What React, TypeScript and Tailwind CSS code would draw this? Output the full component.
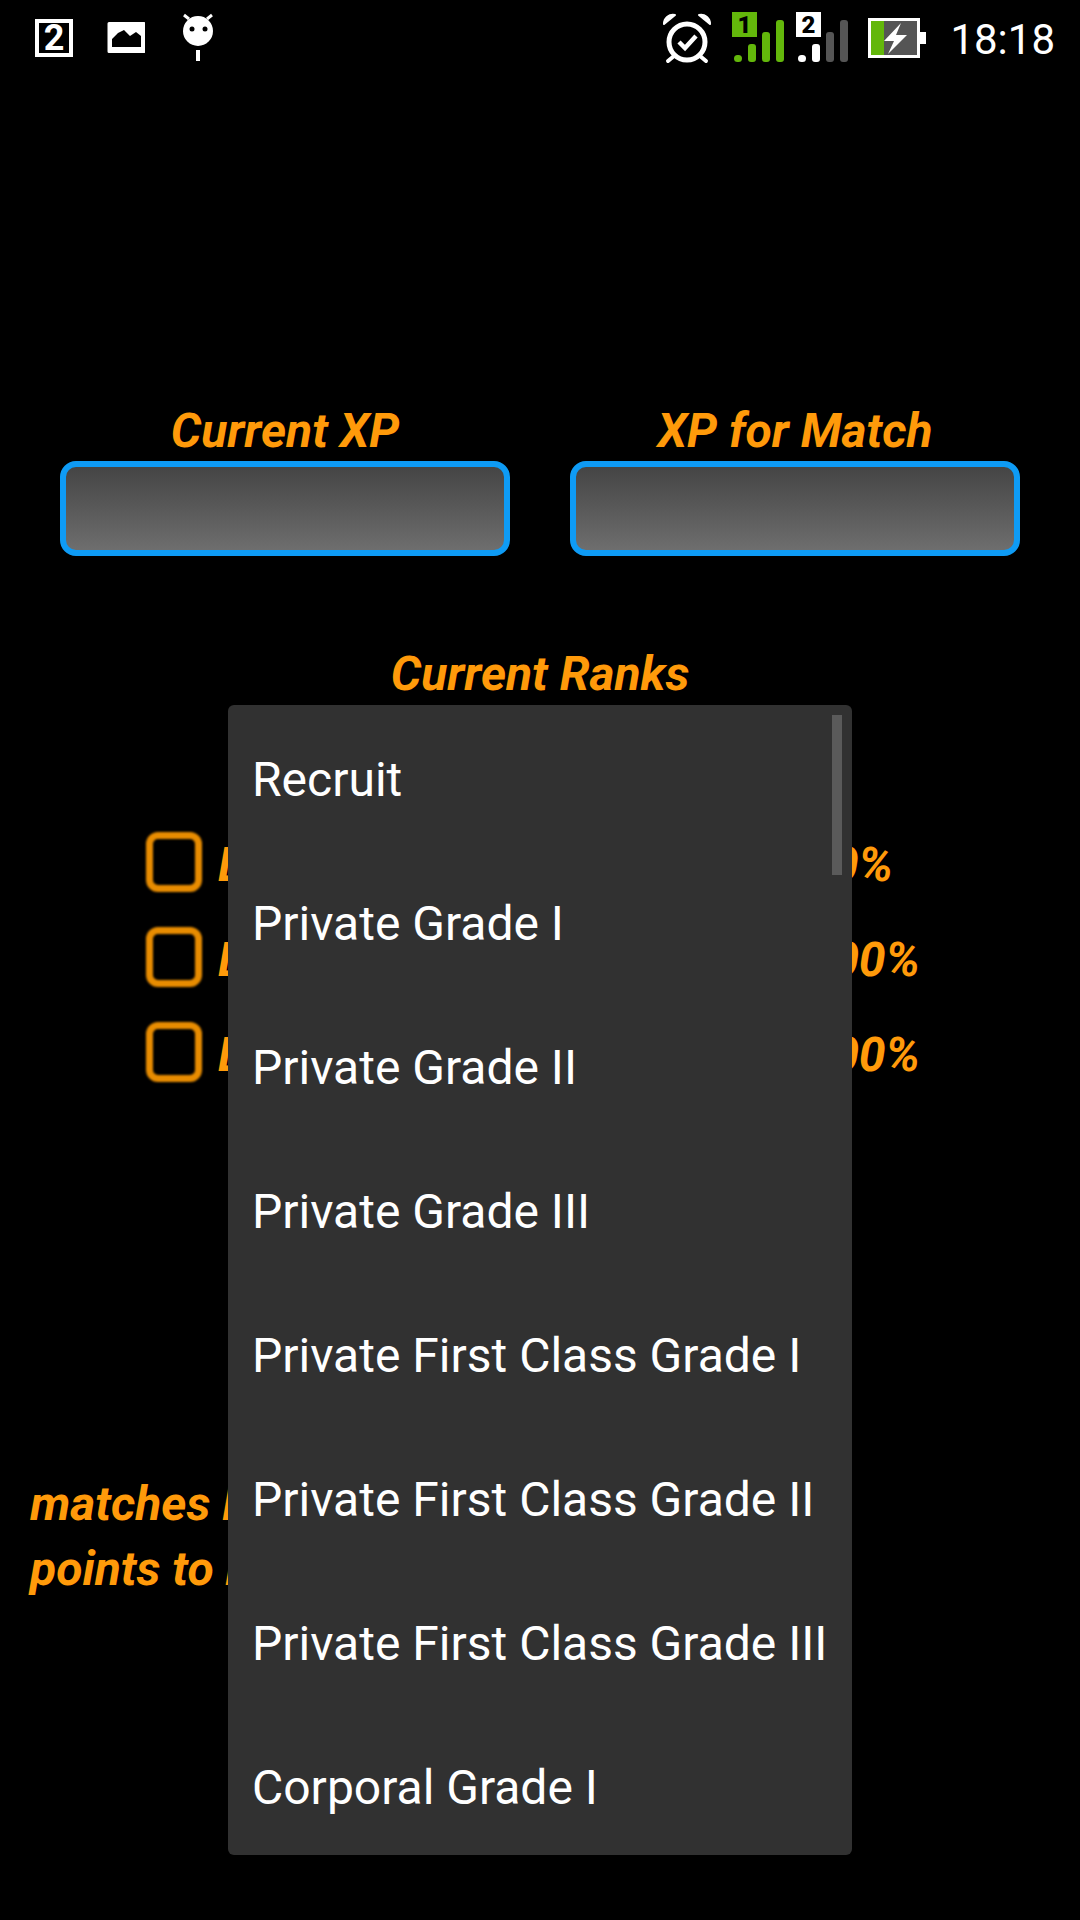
const ranks = [
  "Recruit",
  "Private Grade I",
  "Private Grade II",
  "Private Grade III",
  "Private First Class Grade I",
  "Private First Class Grade II",
  "Private First Class Grade III",
  "Corporal Grade I",
];

const boosts = [
  { first: "L", pct: "50%", short: true },
  { first: "L", pct: "100%", short: false },
  { first: "L", pct: "100%", short: false },
];

function Bars({ x, on, badge, label }: { x: number; on: string; badge: string; label: string }) {
  // two bars lit for sim 2, all four for sim 1
  const off = on === "#fff" ? "#555" : on;
  return (
    <g>
      <rect x={x + 2} y={55} width={8} height={7} rx={3.5} fill={on} />
      <rect x={x + 16} y={44} width={8} height={18} rx={3} fill={on} />
      <rect x={x + 30} y={32} width={8} height={30} rx={3} fill={off} />
      <rect x={x + 44} y={20} width={8} height={42} rx={3} fill={off} />
      <rect x={x} y={12} width={25} height={25} fill={badge} />
      <text x={x + 12.5} y={33} textAnchor="middle" fontSize={24} fontWeight={900} fill="#000" fontFamily="Roboto, sans-serif">
        {label}
      </text>
    </g>
  );
}

function StatusBar() {
  return (
    <div className="flex h-[75px] items-start justify-between pr-[25px] pl-[35px]">
      <div className="flex">
        <div className="mt-[19px] flex h-[38px] w-[38px] items-center justify-center border-[4px] border-white text-[36px] leading-none font-bold text-white">
          2
        </div>
        <svg width="38" height="75" viewBox="0 0 38 75" className="ml-[34px]">
          <path
            fillRule="evenodd"
            fill="#fff"
            d="M2 22h35a1.500 1.500 0 0 1 1.500 1.500v28a1.500 1.500 0 0 1-1.500 1.500H2a1.500 1.500 0 0 1-1.500-1.500v-28A1.500 1.500 0 0 1 2 22zM5 47h29V36l-5-4-6 4-6-6-6 3-6 6z"
          />
        </svg>
        <svg width="44" height="75" viewBox="0 0 44 75" className="ml-[31px]">
          <circle cx="22" cy="31" r="15" fill="#fff" />
          <path d="M13 19l-5-4M31 19l5-4" stroke="#fff" strokeWidth="3" />
          <rect x="20" y="50" width="4" height="11" fill="#fff" />
          <circle cx="16" cy="29" r="2.500" fill="#000" />
          <circle cx="29" cy="29" r="2.500" fill="#000" />
        </svg>
      </div>
      <div className="flex">
        <svg width="56" height="75" viewBox="0 0 56 75">
          <circle cx="28" cy="42" r="18" fill="none" stroke="#fff" strokeWidth="5" />
          <path d="M5 24a9 9 0 0 1 11-9zM51 24a9 9 0 0 0-11-9z" fill="#fff" stroke="#fff" strokeWidth="2" strokeLinejoin="round" />
          <path d="M15 56l-6 5M41 56l6 5" stroke="#fff" strokeWidth="4" strokeLinecap="round" />
          <path d="M20 42l6 6 11-12" fill="none" stroke="#fff" strokeWidth="4.500" />
        </svg>
        <svg width="122" height="75" viewBox="0 0 122 75" className="ml-[17px]">
          <Bars x={0} on="#63b70b" badge="#63b70b" label="1" />
          <Bars x={64} on="#fff" badge="#fff" label="2" />
        </svg>
        <svg width="60" height="75" viewBox="0 0 60 75" className="ml-[13px]">
          <rect x="1" y="18" width="52" height="40" fill="#fff" />
          <rect x="4" y="21" width="46" height="34" fill="#555" />
          <rect x="4" y="21" width="13" height="34" fill="#63b70b" />
          <rect x="53" y="32" width="6" height="12" fill="#fff" />
          <path d="M34 23L17 41h10l-6 13 19-19H29z" fill="#fff" />
        </svg>
        <span className="mt-[15px] ml-[23px] text-[42px] leading-[50px] text-white">18:18</span>
      </div>
    </div>
  );
}

function XpField({ label }: { label: string }) {
  return (
    <div className="w-[450px]">
      <div className="mb-[5px] text-center text-[48px] leading-[50px] font-bold text-[#ff9a0a] italic">{label}</div>
      <div className="h-[95px] rounded-[16px] border-[6px] border-[#0e9bf5] bg-gradient-to-b from-[#454545] to-[#6e6e6e]" />
    </div>
  );
}

function BoostRow({ first, pct, short }: { first: string; pct: string; short: boolean }) {
  return (
    <div className="flex h-[60px] w-[774px] items-center">
      <div className="h-[60px] w-[56px] rounded-[12px] border-[7px] border-[#e88c00] blur-[1px]" />
      <div className="ml-[16px] flex flex-1 justify-between pt-[6px] text-[48px] leading-[50px] font-bold text-[#ff9a0a] italic">
        <span>{first}</span>
        <span className={short ? "pr-[27px]" : ""}>{pct}</span>
      </div>
    </div>
  );
}

export default function App() {
  return (
    <div className="relative h-[1920px] w-[1080px] overflow-hidden bg-black font-['Roboto',sans-serif]">
      <StatusBar />

      <div className="mt-[331px] flex justify-between px-[60px]">
        <XpField label="Current XP" />
        <XpField label="XP for Match" />
      </div>

      <div className="mt-[93px] text-center text-[48px] leading-[50px] font-bold text-[#ff9a0a] italic">Current Ranks</div>

      <div className="mt-[133px] flex flex-col gap-[35px] pl-[146px]">
        {boosts.map((b, i) => (
          <BoostRow key={i} first={b.first} pct={b.pct} short={b.short} />
        ))}
      </div>

      <div className="mt-[389px] px-[30px] text-[48px] leading-[65px] font-bold text-[#ff9a0a] italic">
        <div>matches left</div>
        <div>points to rank</div>
      </div>

      {/* open rank spinner */}
      <div className="absolute top-[705px] left-[228px] h-[1150px] w-[624px] overflow-hidden rounded-[6px] bg-[#313131] pt-[3px]">
        <div className="absolute top-[10px] right-[10px] h-[160px] w-[10px] bg-[#5a5a5a]" />
        {ranks.map((r) => (
          <div key={r} className="flex h-[144px] items-center pl-[24px] text-[48px] leading-none text-white">
            {r}
          </div>
        ))}
      </div>
    </div>
  );
}
